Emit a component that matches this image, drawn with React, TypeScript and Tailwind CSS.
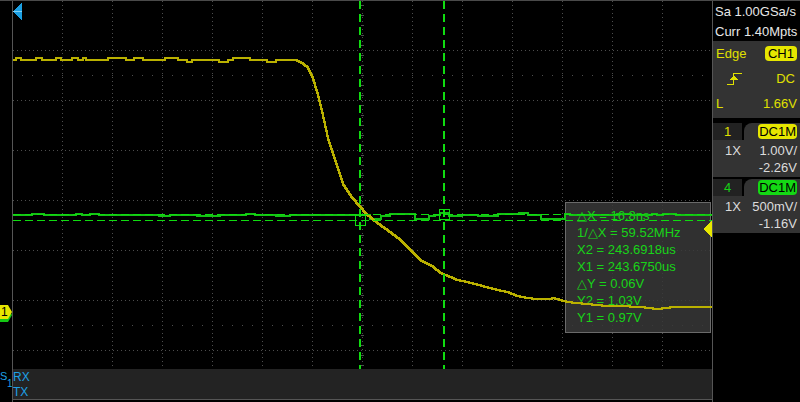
const YEL = '#bab100';
const GRN_TRACE = '#14c214';
const GRN_CUR = '#10dc10';
const GRID = '#4d4d4d';

function rand(seed: number) {
  let s = seed;
  return () => {
    s = (s * 16807) % 2147483647;
    return s / 2147483647;
  };
}

function interp(pts: number[][], x: number) {
  for (let i = 0; i < pts.length - 1; i++) {
    const [x0, y0] = pts[i];
    const [x1, y1] = pts[i + 1];
    if (x >= x0 && x <= x1) return y0 + ((y1 - y0) * (x - x0)) / (x1 - x0);
  }
  return pts[pts.length - 1][1];
}

function stepPath(ys: number[], x0: number) {
  let d = `M${x0} ${ys[0]}`;
  for (let i = 1; i < ys.length; i++) {
    if (ys[i] !== ys[i - 1]) d += `H${x0 + i}V${ys[i]}`;
  }
  return d + `H${x0 + ys.length}`;
}

// falling edge of CH1, page coordinates
const fall = [
  [296, 60], [300, 62], [307, 67], [312, 77], [317, 93], [322, 113], [328, 140], [333, 155],
  [338, 170], [343, 185], [352, 198], [360, 207], [365, 213], [377, 223], [387, 230], [400, 240],
  [410, 250], [420, 260], [433, 267], [440, 273], [450, 277], [457, 280], [467, 282], [482, 286],
  [497, 290], [507, 292], [517, 296], [527, 298], [537, 299], [550, 299], [553, 298], [557, 299],
  [567, 302], [587, 304], [607, 306], [620, 306], [640, 307], [657, 309], [673, 307], [712, 307],
];

function yellowTrace() {
  const r = rand(11);
  const ys: number[] = [];
  const lv = [58, 58, 60, 60, 60, 62];
  while (ys.length < 296 - 13) {
    const len = 3 + Math.floor(r() * 7);
    const y = lv[Math.floor(r() * lv.length)];
    for (let i = 0; i < len && ys.length < 296 - 13; i++) ys.push(y);
  }
  for (let x = 296; x < 712; x++) ys.push(Math.round(interp(fall, x)));
  return stepPath(ys, 13);
}

function greenTrace() {
  const r = rand(5);
  const ys: number[] = [];
  while (ys.length < 712 - 13) {
    const x = 13 + ys.length;
    const wide = x > 330 && x < 565;
    const len = 5 + Math.floor(r() * 12);
    const lv = wide ? [213, 214, 215, 216, 218, 219] : [214, 215, 215, 215, 216];
    const y = lv[Math.floor(r() * lv.length)];
    for (let i = 0; i < len && ys.length < 712 - 13; i++) ys.push(y);
  }
  return stepPath(ys, 13);
}

const yPath = yellowTrace();
const gPath = greenTrace();

function Grid() {
  const hs = [50, 100, 150, 200, 250, 300, 350];
  const vs = [62, 112, 162, 212, 262, 312, 362, 412, 462, 512, 562, 612, 662];
  const ticks: number[] = [];
  for (let x = 22; x < 712; x += 10) ticks.push(x);
  const vticks: number[] = [];
  for (let y = 5; y < 369; y += 10) vticks.push(y);
  return (
    <svg width={699} height={368} viewBox="13 1 699 368" shapeRendering="crispEdges" className="block">
      {hs.map((y) => (
        <line key={'h' + y} x1={13} x2={712} y1={y + 0.5} y2={y + 0.5} stroke={GRID} strokeDasharray="1 3" />
      ))}
      {vs.map((x) => (
        <line key={'v' + x} x1={x + 0.5} x2={x + 0.5} y1={1} y2={369} stroke={GRID} strokeDasharray="1 3" />
      ))}
      {ticks.map((x) => (
        <g key={'t' + x}>
          <rect x={x} y={75} width={1} height={1} fill={GRID} />
          <rect x={x} y={325} width={1} height={1} fill={GRID} />
        </g>
      ))}
      {vticks.map((y) => (
        <rect key={'vt' + y} x={361} y={y} width={3} height={1} fill={GRID} />
      ))}
    </svg>
  );
}

function Traces() {
  return (
    <svg
      width={699}
      height={368}
      viewBox="13 1 699 368"
      shapeRendering="crispEdges"
      className="absolute inset-0 pointer-events-none"
    >
      <path d={gPath} fill="none" stroke={GRN_TRACE} strokeWidth={2} />
      <path d={yPath} fill="none" stroke={YEL} strokeWidth={2} />
      <line x1={13} x2={712} y1={214.5} y2={214.5} stroke={GRN_CUR} strokeWidth={1.5} strokeDasharray="8 4" />
      <line x1={13} x2={712} y1={220.5} y2={220.5} stroke={GRN_CUR} strokeWidth={1} strokeDasharray="8 4" />
      <line x1={360} x2={360} y1={1} y2={369} stroke={GRN_CUR} strokeWidth={2} strokeDasharray="8 5" />
      <line x1={444} x2={444} y1={1} y2={369} stroke={GRN_CUR} strokeWidth={2} strokeDasharray="8 5" />
      <rect x={355.5} y={215.5} width={10} height={10} fill="none" stroke={GRN_CUR} strokeWidth={1} />
      <rect x={439.5} y={209.5} width={10} height={10} fill="none" stroke={GRN_CUR} strokeWidth={1} />
      {/* trigger position marker */}
      <polygon points="13,11.5 22,3 22,20" fill="#1c9fe2" />
      <line x1={13} x2={22} y1={11.5} y2={11.5} stroke="#7fd0f5" strokeWidth={1} />
      {/* trigger level marker */}
      <polygon points="703,229 711,221 712,221 712,237 711,237" fill="#e8e800" />
    </svg>
  );
}

const measures = [
  '△X = 16.8ns',
  '1/△X = 59.52MHz',
  'X2 = 243.6918us',
  'X1 = 243.6750us',
  '△Y = 0.06V',
  'Y2 = 1.03V',
  'Y1 = 0.97V',
];

function TrigIcon() {
  return (
    <svg width={16} height={14} viewBox="0 0 16 14" shapeRendering="crispEdges">
      <path d="M0 12.5H6.5V1.5H15" fill="none" stroke="#e0e000" strokeWidth={1.5} />
      <polygon points="2,8 6.5,3.5 11,8" fill="#e0e000" />
    </svg>
  );
}

function ChannelBox({ num, color, scale, offset }: { num: string; color: string; scale: string; offset: string }) {
  const isYel = color === 'yellow';
  return (
    <div className="h-[54px] flex flex-col bg-[#333333]">
      <div className="flex h-[17px] bg-black">
        <div
          className={
            'w-[29px] bg-[#222222] text-center leading-[17px] ' + (isYel ? 'text-[#e0e000]' : 'text-[#16d016]')
          }
        >
          {num}
        </div>
        <div className="flex-1 ml-[2px] bg-[#333333] rounded-tl-[8px] flex items-center justify-end pr-[3px]">
          <span
            className={
              'h-[15px] leading-[15px] px-[1px] rounded-[4px] text-black ' + (isYel ? 'bg-[#e6e600]' : 'bg-[#14d814]')
            }
          >
            DC1M
          </span>
        </div>
      </div>
      <div className="mt-[2px] h-[18px] leading-[18px] flex text-[#dcdcdc]">
        <span className="w-[38px] pl-[12px]">1X</span>
        <span className="flex-1 text-right pr-[3px]">{scale}</span>
      </div>
      <div className="h-[15px] leading-[15px] text-right pr-[3px] text-[#dcdcdc]">{offset}</div>
    </div>
  );
}

export default function App() {
  return (
    <div className="w-[800px] h-[402px] bg-black flex overflow-hidden border-t border-[#4a4a4a] text-[13px] font-['Liberation_Sans',Arial,sans-serif]">
      {/* left gutter */}
      <div className="w-[12px] flex flex-col">
        <div className="relative h-[368px]">
          <svg width={12} height={20} viewBox="0 0 12 20" className="absolute left-0 top-[304px]">
            <polygon points="0,3 8,3 12,10 8,17 0,17" fill="#14c814" />
            <polygon points="0,0 8,0 12,7 8,14 0,14" fill="#e6e600" />
          </svg>
          <span className="absolute left-[1px] top-[304px] text-[12px] leading-[14px] text-black">1</span>
        </div>
        <div className="h-[31px] relative text-[#1ea0e6]">
          <span className="absolute left-[0px] top-[1px] leading-[12px] text-[11px]">S</span>
          <span className="absolute left-[7px] top-[9px] leading-[11px] text-[10px]">1</span>
        </div>
      </div>

      {/* scope area */}
      <div className="w-[700px] border-l border-[#555555] flex flex-col">
        <div className="relative h-[368px]">
          <Grid />
          <div className="absolute left-[552px] top-[201px] w-[146px] h-[131px] border border-[#6a6a6a] bg-[#383838]/85 pl-[11px] pt-[4px] text-[#18d418]">
            {measures.map((m) => (
              <div key={m} className="h-[17px] leading-[17px] whitespace-nowrap">
                {m}
              </div>
            ))}
          </div>
          <Traces />
        </div>
        <div className="h-[31px] bg-[#232323] border-b border-[#555555] text-[#1ea0e6] text-[12px] flex flex-col pt-[1px]">
          <div className="h-[15px] leading-[15px]">RX</div>
          <div className="h-[15px] leading-[15px]">TX</div>
        </div>
      </div>

      {/* right panel */}
      <div className="w-[88px] border-l border-[#555555] flex flex-col">
        <div className="h-[40px] flex flex-col text-[#e8e8e8] pl-[2px] whitespace-nowrap">
          <div className="h-[22px] leading-[22px]">Sa 1.00GSa/s</div>
          <div className="h-[18px] leading-[18px]">Curr 1.40Mpts</div>
        </div>
        <div className="h-[77px] bg-[#333333] flex flex-col text-[#e0e000]">
          <div className="h-[25px] flex items-center justify-between pl-[3px] pr-[3px]">
            <span>Edge</span>
            <span className="h-[15px] leading-[15px] px-[3px] rounded-[4px] bg-[#e6e600] text-black">CH1</span>
          </div>
          <div className="h-[25px] flex items-center justify-between pl-[14px] pr-[5px]">
            <TrigIcon />
            <span>DC</span>
          </div>
          <div className="h-[25px] flex items-center justify-between pl-[3px] pr-[3px]">
            <span>L</span>
            <span>1.66V</span>
          </div>
        </div>
        <div className="h-[5px]" />
        <ChannelBox num="1" color="yellow" scale="1.00V/" offset="-2.26V" />
        <div className="h-[2px]" />
        <ChannelBox num="4" color="green" scale="500mV/" offset="-1.16V" />
      </div>
    </div>
  );
}
